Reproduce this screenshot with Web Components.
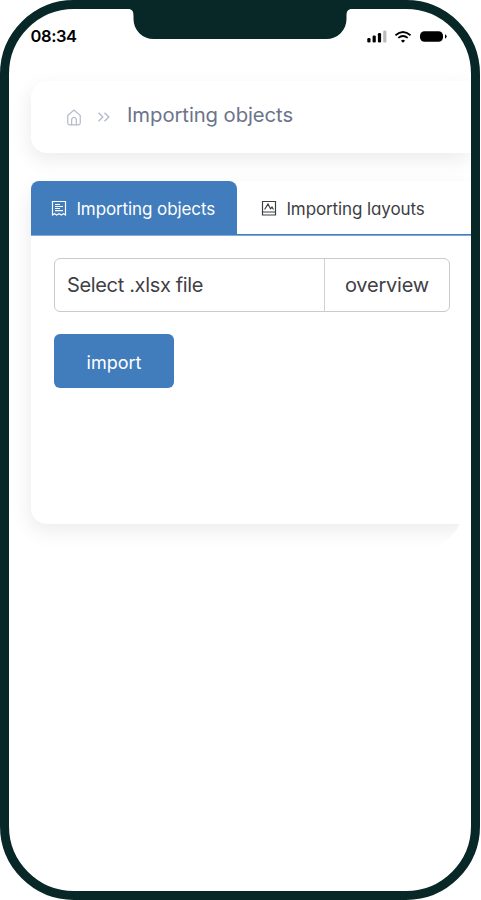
<!DOCTYPE html>
<html lang="en">
<head>
<meta charset="utf-8">
<title>Importing objects</title>
<style>
html,body{margin:0;background:#fff}
body{font-family:Inter,"Open Sans",sans-serif;width:481px;height:900px;overflow:hidden}
</style>
</head>
<body>
<phone-frame>
  <status-bar slot="status">08:34</status-bar>
  <crumb-bar>Importing objects</crumb-bar>
  <import-panel>
    <tab-item slot="tabs" icon="receipt" active>Importing objects</tab-item>
    <tab-item slot="tabs" icon="chart">Importing layouts</tab-item>
    <file-field action="overview">Select .xlsx file</file-field>
    <action-button>import</action-button>
  </import-panel>
</phone-frame>
<script>
const define = (name, html) => customElements.define(name, class extends HTMLElement {
  connectedCallback() {
    if (this.shadowRoot) return;
    this.attachShadow({mode: 'open'}).innerHTML = typeof html === 'function' ? html(this) : html;
  }
});

define('phone-frame', `<style>
:host{display:block;position:relative;box-sizing:border-box;width:480px;height:900px;border:9px solid #082828;border-radius:74px;overflow:hidden;background:#fff}
.notch{position:absolute;left:119px;top:-1px;display:block}
main{display:flex;flex-direction:column;gap:28px;padding-left:22.400px}
</style>
<svg class="notch" width="224" height="32" viewBox="0 0 224 32"><path fill="#082828" d="M0 0H224V1C220 1 218.500 3 218.500 8V11A20 20 0 0 1 198.500 31H25.500A20 20 0 0 1 5.500 11V8C5.500 3 4 1 0 1Z"/></svg>
<slot name="status"></slot><main><slot></slot></main>`);

define('status-bar', `<style>
:host{display:flex;box-sizing:border-box;height:72px;padding:17px 23px 0 21.500px;justify-content:space-between;align-items:flex-start;color:#000;font-size:16.500px;font-weight:600;line-height:20px}
span{letter-spacing:-.4px}
svg{display:block;margin-top:3px}
</style><span><slot></slot></span>
<svg width="82" height="16" viewBox="0 0 82 16">
<g><rect x="1.300" y="9" width="3.200" height="4.500" rx="1.200"/><rect x="6.600" y="6.600" width="3.200" height="6.900" rx="1.200"/><rect x="11.900" y="4.100" width="3.200" height="9.400" rx="1.200"/><rect x="17.200" y="1.500" width="3.200" height="12" rx="1.200" fill="#bbb"/></g>
<g fill="none" stroke="#000" stroke-width="1.800"><path d="M29.500 6.200Q37 -.3 44.500 6.200"/><path d="M32.300 8.900Q37 5 41.700 8.900"/></g><path d="M34.900 11.700Q37 9.900 39.100 11.700L37 13.800Z"/>
<rect x="54" y="2.300" width="23" height="10.400" rx="4.500"/><path d="M79 5.300Q82.400 7.500 79 9.700Z"/>
</svg>`);

define('crumb-bar', `<style>
:host{display:flex;box-sizing:border-box;height:72px;padding-left:36.100px;align-items:center;border-radius:16px 0 0 16px;background:#fff;box-shadow:-2px 7px 20px rgba(0,0,0,.08);clip-path:inset(-12px 0 -35px -35px);color:#6c7489;font-size:20.300px;line-height:24px}
svg{display:block;fill:none;stroke:#b4b7ca}
.sep{margin:0 17px 0 15.500px}
span{margin-top:-5px;white-space:nowrap;letter-spacing:-.08px}
</style>
<svg class="home" width="14" height="17" viewBox="0 0 15 18"><path stroke-width="1.250" d="M.8 6.800L7.500 1L14.200 6.800V15Q14.200 16.900 12.300 16.900H2.700Q.8 16.900 .8 15ZM5 16.500V11.300Q5 9 7.500 9Q10 9 10 11.300V16.500"/></svg>
<svg class="sep" width="13" height="12" viewBox="0 0 13 12"><path stroke-width="1.300" d="M1.500 1.800L5.800 6L1.500 10.200M7.500 1.800L11.800 6L7.500 10.200"/></svg>
<span><slot></slot></span>`);

define('import-panel', `<style>
:host{display:block;box-sizing:border-box;height:342.500px;border-radius:16px 0 0 16px;background:#fff;box-shadow:-2px 7px 20px rgba(0,0,0,.08);clip-path:polygon(-35px -12px,100% -12px,100% 342px,429px 342px,424px 351px,414px 361px,400px 380px,-35px 380px)}
nav{display:flex;box-sizing:border-box;height:55px;background:linear-gradient(#417cbc,#417cbc) 0 53px/100% 1px no-repeat,linear-gradient(#84a9d4,#84a9d4) 0 54px/100% 1px no-repeat}
section{display:flex;flex-direction:column;align-items:flex-start;gap:22px;padding:22px 22.600px}
</style><nav><slot name="tabs"></slot></nav><section><slot></slot></section>`);

const icons = {
  receipt: '<path d="M1.500 15V1.500H14.500V15L12.500 13.800L10.300 15L8 13.800L5.700 15L3.500 13.800ZM4 4.500H9M4 6.500H12M4 8.500H9M4 10.700H12"/>',
  chart: '<path d="M1.500 1.500H14.500V15H1.500ZM1.500 12H14.500M3.600 9.500L7 4L9.500 8.800L11 7.100L12.500 9.500"/>'
};
define('tab-item', el => `<style>
:host{display:flex;box-sizing:border-box;height:54px;padding:0 19.500px;align-items:center;gap:9.500px;border-radius:8px 8px 0 0;color:#3d3e44;font-size:17px;line-height:22px}
:host([active]){width:206px;background:#417cbc;color:#fff}
:host(:not([active])){padding-left:23.500px}
svg{display:block;fill:none;stroke:currentColor;stroke-width:1.200;flex:none}
span{padding-top:2px;white-space:nowrap;font-feature-settings:"cv11";letter-spacing:-.1px}
</style><svg width="16" height="17" viewBox="0 0 16 17">${icons[el.getAttribute('icon')]}</svg><span><slot></slot></span>`);

define('file-field', el => `<style>
:host{display:flex;box-sizing:border-box;width:396px;height:54px;border:1px solid #c9cacc;border-radius:6px;color:#3f4046;font-size:20px;line-height:53px}
.name{flex:1;padding-left:12px;letter-spacing:-.34px}
.action{box-sizing:border-box;width:125px;border-left:1px solid #cfd0d2;text-align:center;letter-spacing:-.2px}
</style><span class="name"><slot></slot></span><span class="action">${el.getAttribute('action')}</span>`);

define('action-button', `<style>
:host{display:flex;width:120px;height:54px;border-radius:6px;background:#417cbc;color:#fff;font-size:18px;line-height:24px;align-items:center;justify-content:center}
span{padding-top:4px}
</style><span><slot></slot></span>`);
</script>
</body>
</html>
